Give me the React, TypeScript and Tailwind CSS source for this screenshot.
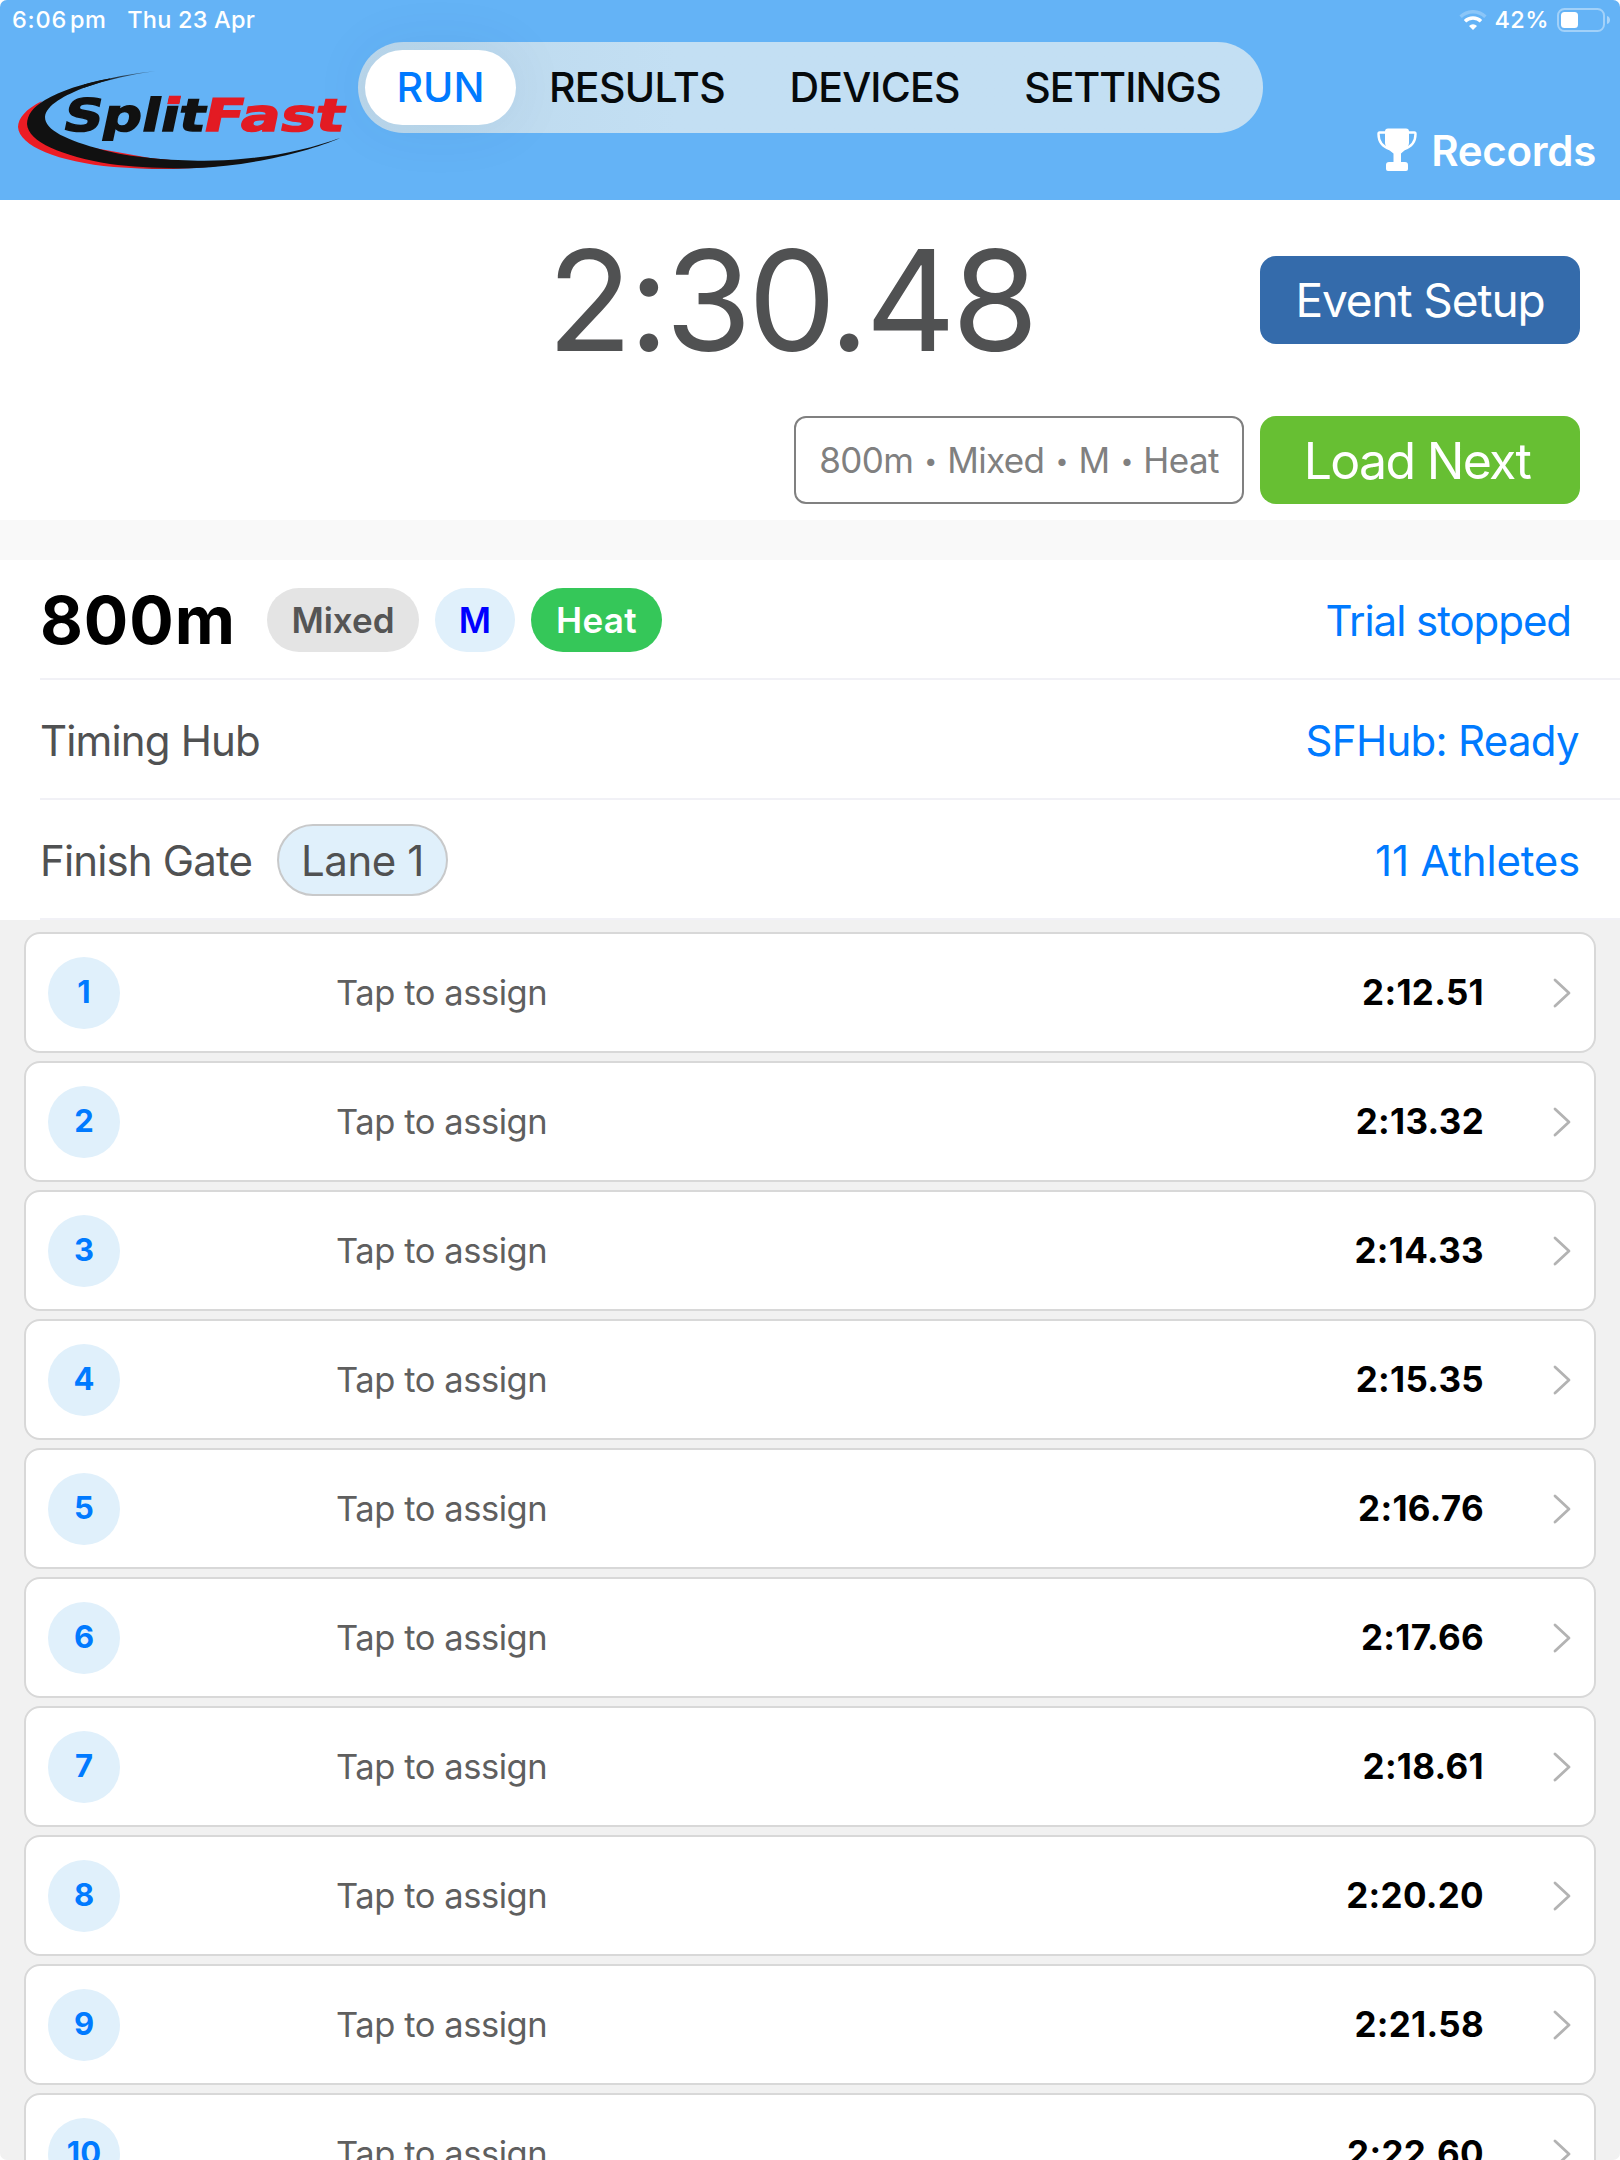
'use client'
import { useState } from "react";

const tabs = [
    { name: 'RUN', css: 'w-[151px] tracking-normal' },
    { name: 'RESULTS', css: 'w-[242px] tracking-[-0.65px]' },
    { name: 'DEVICES', css: 'w-[233px] tracking-[-0.82px]' },
    { name: 'SETTINGS', css: 'w-[263px] tracking-[-0.94px]' },
];

const results = [
    { place: 1, time: '2:12.51' },
    { place: 2, time: '2:13.32' },
    { place: 3, time: '2:14.33' },
    { place: 4, time: '2:15.35' },
    { place: 5, time: '2:16.76' },
    { place: 6, time: '2:17.66' },
    { place: 7, time: '2:18.61' },
    { place: 8, time: '2:20.20' },
    { place: 9, time: '2:21.58' },
    { place: 10, time: '2:22.60' },
];

const nextEvent = ['800m', 'Mixed', 'M', 'Heat'];

function Logo(){
    return (
        <svg width="334" height="106" viewBox="16 68 334 106" aria-label="SplitFast">
            <defs>
                <linearGradient id="redArc" gradientUnits="userSpaceOnUse" x1="130" y1="0" x2="228" y2="0">
                    <stop offset="0" stopColor="#ec1c24" />
                    <stop offset="1" stopColor="#111" />
                </linearGradient>
                <linearGradient id="blackArc" gradientUnits="userSpaceOnUse" x1="95" y1="60" x2="155" y2="52">
                    <stop offset="0" stopColor="#111" />
                    <stop offset="1" stopColor="#111" stopOpacity="0.3" />
                </linearGradient>
                <clipPath id="dot">
                    <rect x="163" y="90" width="18" height="14.500" />
                </clipPath>
            </defs>
            <path d="M42 101C26 109 18 118 18 127C19 146 58 162 114 167C152 170 195 170 224 165L150 158L50 140L30 115Z" fill="url(#redArc)" />
            <path d="M110 78.500C84 83 60 91 45 100C33 107 27 115 27 124C28 142 62 156 110 164C150 169 200 170 241 164C280 158 318 148 340 138C312 148 280 156 241 159C205 163 140 160 103 150C66 140 45 130 45 117C46 105 65 95 86 87C94 84 102 81.500 110 79.500Z" fill="#111" />
            <path d="M156 71C135 73 108 78 84 84.500L84 87.800C108 79.500 132 74 156 71Z" fill="url(#blackArc)" />
            <g fontFamily="'DejaVu Sans', sans-serif" fontWeight="bold" fontSize="45" strokeWidth="1.400">
                <text x="61" y="0" textLength="142" lengthAdjust="spacingAndGlyphs" fill="#111" stroke="#111" transform="translate(0 131) skewX(-12)">Split</text>
                <g clipPath="url(#dot)" aria-hidden="true">
                    <text x="61" y="0" textLength="142" lengthAdjust="spacingAndGlyphs" fill="#e31b23" stroke="#e31b23" strokeWidth="2" transform="translate(0 131) skewX(-12)">Split</text>
                </g>
                <text x="201" y="0" textLength="141" lengthAdjust="spacingAndGlyphs" fill="#e31b23" stroke="#e31b23" transform="translate(0 131) skewX(-12)">Fast</text>
            </g>
        </svg>
    );
}

function Wifi(){
    return (
        <svg width="28" height="21" viewBox="0 0 28 21" fill="none" stroke="white">
            <path d="M1.600 6.800A17.600 17.600 0 0 1 26.400 6.800" strokeWidth="3.400" opacity="0.25" />
            <path d="M6 11.300A11.400 11.400 0 0 1 22 11.300" strokeWidth="3.400" />
            <path d="M14 20L10 16A5.700 5.700 0 0 1 18 16Z" fill="white" stroke="none" />
        </svg>
    );
}

function Battery(){
    return (
        <svg width="54" height="24" viewBox="0 0 54 24">
            <rect x="1" y="1" width="46" height="22" rx="6.500" fill="none" stroke="white" strokeOpacity="0.4" strokeWidth="2" />
            <rect x="4" y="4" width="17" height="16" rx="3.500" fill="white" />
            <path d="M50 8C54 9 54 15 50 16Z" fill="white" fillOpacity="0.45" />
        </svg>
    );
}

function Trophy(){
    return (
        <svg width="40" height="44" viewBox="0 0 40 44" fill="white">
            <path d="M11 0.500H29Q32 0.500 32 3.500V15Q31.500 20 28 22L24 25.500V34H28Q31 34 31 37V41Q31 43 29 43H11Q9 43 9 41V37Q9 34 12 34H16.500V25.500L12 22Q8.500 20 8 15V3.500Q8 0.500 11 0.500Z" />
            <path d="M9 4.500H2.600Q1.500 4.500 1.500 6C1.500 14 6 19 13 21" fill="none" stroke="white" strokeWidth="2.400" />
            <path d="M31 4.500H37.400Q38.500 4.500 38.500 6C38.500 14 34 19 27 21" fill="none" stroke="white" strokeWidth="2.400" />
        </svg>
    );
}

function ResultRow(props:any){
    return (
        <article className="flex h-[121px] shrink-0 items-center rounded-[16px] border-2 border-[#d8d8d8] bg-white pl-[22px] pr-[22px]">
            <div className="flex size-[72px] items-center justify-center rounded-full bg-[#e0f0fb] pb-[2px] text-[31px] font-bold text-[#007aff]">
                {props.data.place}
            </div>
            <p className="ml-[216px] flex-1 pt-[2px] text-[34.5px] tracking-[-0.44px] text-[#5f5f5f]">Tap to assign</p>
            <p className="text-[35px] font-bold tracking-[0.3px] text-black">{props.data.time}</p>
            <svg className="ml-[69px]" width="19" height="30" viewBox="0 0 19 30" fill="none" stroke="#b3b3b3" strokeWidth="2.800" strokeLinecap="round" strokeLinejoin="round">
                <path d="M2 2L16 15L2 28" />
            </svg>
        </article>
    );
}

export default function App(){
    const [active, setActive] = useState('RUN');
    return (
        <div className="h-[2160px] w-[1620px] overflow-hidden bg-white">
            <div className="flex h-full flex-col overflow-hidden rounded-[7px] bg-[#f1f1f1] font-['Inter',sans-serif] leading-none whitespace-nowrap">
                <header className="h-[200px] shrink-0 bg-[#64b3f6]">
                    <div className="flex h-[40px] items-center pl-[12px] pr-[9px] text-[23.5px] font-medium text-white">
                        <span className="tracking-[0.8px]">6:06</span>
                        <span className="ml-[3px] tracking-[0.4px]">pm</span>
                        <span className="ml-[21px] tracking-[0.2px]">Thu 23 Apr</span>
                        <span className="flex-1" />
                        <Wifi />
                        <span className="ml-[8px] mr-[8px] tracking-[0.4px]">42%</span>
                        <Battery />
                    </div>
                    <div className="flex items-start pl-[16px] pr-[24px]">
                        <div className="mt-[28px] w-[342px]">
                            <Logo />
                        </div>
                        <nav className="mt-[2px] flex h-[91px] w-[905px] items-center rounded-full bg-linear-to-r from-[#bbd8ec] via-[#c3dff3] via-35% to-[#c3dff3] pl-[7px] text-[41px] font-medium">
                            {tabs.map((tab) => (
                                <button
                                    key={tab.name}
                                    type="button"
                                    onClick={() => setActive(tab.name)}
                                    className={`h-[75px] cursor-pointer rounded-full text-center ${tab.css} ${active === tab.name ? 'bg-white text-[#007aff] shadow-[0_0_60px_rgba(0,60,120,0.08)]' : 'text-[#060a0c]'}`}
                                >
                                    {tab.name}
                                </button>
                            ))}
                        </nav>
                        <button type="button" className="ml-auto mt-[87px] flex cursor-pointer items-center gap-[14px] text-[42px] font-semibold tracking-[-0.28px] text-white">
                            <Trophy />
                            <span className="pt-[3px]">Records</span>
                        </button>
                    </div>
                </header>

                <section className="flex h-[320px] shrink-0 flex-col gap-[72px] bg-white pt-[56px] pr-[40px]">
                    <div className="flex h-[88px] items-center">
                        <p className="ml-[322px] flex-1 text-center text-[140px] tracking-[-3.79px] text-[#505152]">2:30.48</p>
                        <button type="button" className="h-[88px] w-[320px] cursor-pointer rounded-[16px] bg-[#346bab] text-[46px] tracking-[-1.1px] text-white">
                            Event Setup
                        </button>
                    </div>
                    <div className="flex h-[88px] justify-end gap-[16px]">
                        <div className="flex w-[450px] items-center justify-center gap-[11px] rounded-[12px] border-2 border-[#808080] text-[35px] tracking-[-0.6px] text-[#808080]">
                            {nextEvent.map((part, i) => (
                                <span key={part} className="flex items-center gap-[11px]">
                                    {i > 0 && <span className="pt-[3px] text-[23px] tracking-[-1px]">•</span>}
                                    {part}
                                </span>
                            ))}
                        </div>
                        <button type="button" className="w-[320px] cursor-pointer rounded-[16px] bg-[#67bf33] pt-[2px] pr-[6px] text-[50px] tracking-[-1.7px] text-white">
                            Load Next
                        </button>
                    </div>
                </section>

                <div className="h-[40px] shrink-0 bg-[#f9f9f9]" />

                <section className="shrink-0 bg-white pl-[40px] text-[42px] text-[#505152]">
                    <div className="flex h-[120px] items-center border-b-2 border-[#f1f1f6] pt-[2px] pr-[49px]">
                        <h1 className="w-[227px] text-[66px] font-bold tracking-[0.9px] text-black">800m</h1>
                        <div className="flex gap-[16px] text-[35px] font-semibold">
                            <span className="flex h-[64px] w-[152px] items-center justify-center rounded-full bg-[#e4e4e4] text-[#555]">Mixed</span>
                            <span className="flex h-[64px] w-[80px] items-center justify-center rounded-full bg-[#e0f0fb] text-[#0000ff]">M</span>
                            <span className="flex h-[64px] w-[131px] items-center justify-center rounded-full bg-[#35c759] tracking-[0.4px] text-white">Heat</span>
                        </div>
                        <p className="ml-auto pt-px tracking-[-1.05px] text-[#007aff]">Trial stopped</p>
                    </div>
                    <div className="flex h-[120px] items-center justify-between border-b-2 border-[#f1f1f6] pt-[3px] pr-[41px]">
                        <p className="tracking-[-0.85px]">Timing Hub</p>
                        <p className="tracking-[-0.7px] text-[#007aff]">SFHub: Ready</p>
                    </div>
                    <div className="flex h-[120px] items-center border-b-2 border-[#f1f1f6] pt-[2px] pr-[40px]">
                        <p className="w-[237px] pt-[2px] tracking-[-0.85px]">Finish Gate</p>
                        <span className="flex h-[72px] w-[171px] items-center justify-center rounded-full border-2 border-[#c8c9ca] bg-[#e0f0fb] pt-px tracking-[-0.4px]">Lane 1</span>
                        <p className="ml-auto pt-[2px] tracking-[-0.22px] text-[#007aff]">11 Athletes</p>
                    </div>
                </section>

                <main className="flex flex-1 flex-col gap-[8px] overflow-hidden px-[24px] pt-[12px]">
                    {results.map((row) => (
                        <ResultRow key={row.place} data={row} />
                    ))}
                </main>
            </div>
        </div>
    );
}
